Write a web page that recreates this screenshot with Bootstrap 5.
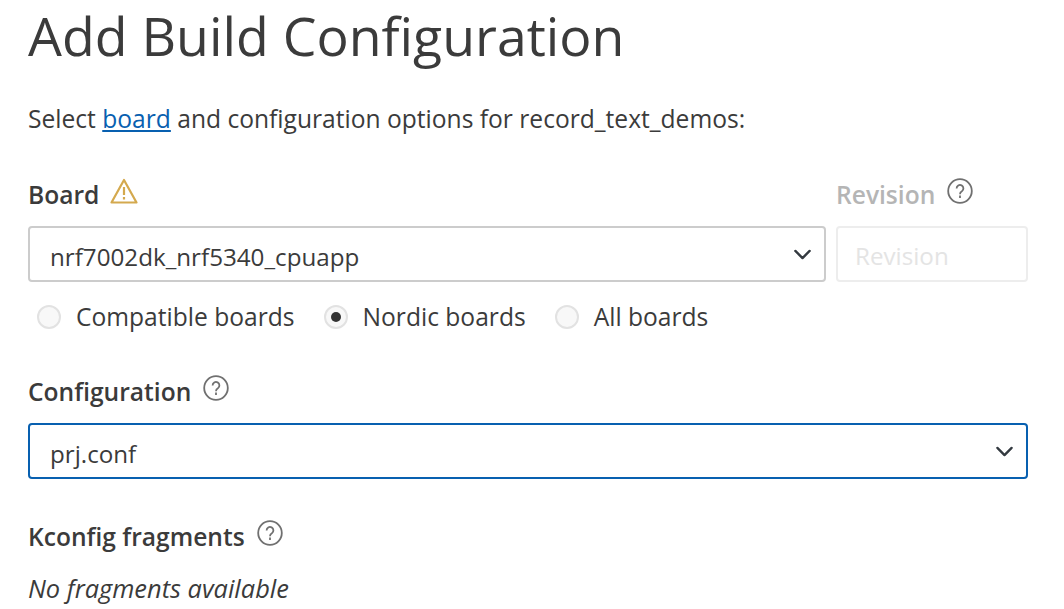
<!DOCTYPE html>
<html lang="en">
<head>
  <meta charset="UTF-8">
  <title>Add Build Configuration</title>
  <link href="https://cdn.jsdelivr.net/npm/bootstrap@5.3.3/dist/css/bootstrap.min.css" rel="stylesheet">
  <style>
    body { font-family: "Open Sans", "Noto Sans", sans-serif; color: #3b3b3b; font-size: 24.6px; overflow: hidden; }
    .page-wrap { padding: 0 36px 0 28px; }
    .page-title { font-size: 53.6px; font-weight: 400; line-height: 72px; margin: 0 0 30px; color: #3b3b3b; }
    .intro-line { line-height: 34px; margin: 0 0 42px; }
    .intro-line a { color: #0860b0; }
    .field-label { font-weight: 600; font-size: 24.6px; line-height: 34px; }
    .field-label.off { color: #b5b5b5; }
    .label-row { margin-bottom: 14px; }
    .board-grid { display: grid; grid-template-columns: 1fr 192px; column-gap: 10px; }
    .board-select, .conf-select, .rev-input {
      height: 56px; font-size: 24.2px; color: #3b3b3b; padding: 7px 50px 0 20px; border-radius: 4px;
      background-size: 19px 19px; background-position: right 12px center;
    }
    .board-select { border: 2px solid #cccccc; }
    .conf-select { border: 2px solid #0860b0; }
    .rev-input, .rev-input:disabled { border: 2px solid #ededed; background: #fff; padding: 3px 8px 0 17px; }
    .rev-input::placeholder { color: #e4e4e4; }
    .radio-row { gap: 29px; padding-left: 9px; height: 70px; margin-bottom: 23px; }
    .radio-dot { width: 24px; height: 24px; border-radius: 50%; border: 2px solid #e2e2e2; background: #f8f8f8; display: inline-flex; align-items: center; justify-content: center; margin-right: 15px; }
    .radio-dot.on::after { content: ""; width: 10px; height: 10px; border-radius: 50%; background: #333; }
    .help-icon { width: 26px; height: 26px; margin: 0 0 8px 12px; }
    .warn-icon { width: 28px; height: 26px; margin: 0 0 8px 11px; }
    .kconfig-row { margin: 41px 0 17px; }
    .no-frags { font-size: 25.4px; line-height: 34px; }
  </style>
</head>
<body class="bg-white">
  <div class="page-wrap">
    <h1 class="page-title">Add Build Configuration</h1>
    <p class="intro-line">Select <a href="#">board</a> and configuration options for record_text_demos:</p>

    <div class="board-grid">
      <div class="d-flex align-items-center label-row">
        <span class="field-label">Board</span>
        <svg class="warn-icon" viewBox="0 0 28 26" fill="none" stroke="#d4a94e" stroke-width="2.2"><path d="M14 2 L26.5 24.5 H1.5 Z" stroke-linejoin="round"/><path d="M14 9 V17 M14 19 V21.5"/></svg>
      </div>
      <div class="d-flex align-items-center label-row">
        <span class="field-label off">Revision</span>
        <svg class="help-icon" viewBox="0 0 26 26" fill="none" stroke="#707070" stroke-width="1.8"><circle cx="13" cy="13" r="11.8"/><path d="M9.6 10.4 a3.4 3.4 0 1 1 5.3 2.8 q-1.9 1 -1.9 3 M13 17.6 V20"/></svg>
      </div>
      <select class="form-select board-select"><option>nrf7002dk_nrf5340_cpuapp</option></select>
      <input class="form-control rev-input" placeholder="Revision" disabled>
    </div>
    <div class="d-flex align-items-center radio-row">
      <div class="d-flex align-items-center"><span class="radio-dot"></span>Compatible boards</div>
      <div class="d-flex align-items-center"><span class="radio-dot on"></span>Nordic boards</div>
      <div class="d-flex align-items-center"><span class="radio-dot"></span>All boards</div>
    </div>

    <div class="d-flex align-items-center label-row">
      <span class="field-label">Configuration</span>
      <svg class="help-icon" viewBox="0 0 26 26" fill="none" stroke="#707070" stroke-width="1.8"><circle cx="13" cy="13" r="11.8"/><path d="M9.6 10.4 a3.4 3.4 0 1 1 5.3 2.8 q-1.9 1 -1.9 3 M13 17.6 V20"/></svg>
    </div>
    <select class="form-select conf-select"><option>prj.conf</option></select>

    <div class="d-flex align-items-center kconfig-row">
      <span class="field-label">Kconfig fragments</span>
      <svg class="help-icon" viewBox="0 0 26 26" fill="none" stroke="#707070" stroke-width="1.8"><circle cx="13" cy="13" r="11.8"/><path d="M9.6 10.4 a3.4 3.4 0 1 1 5.3 2.8 q-1.9 1 -1.9 3 M13 17.6 V20"/></svg>
    </div>
    <div class="fst-italic no-frags">No fragments available</div>
  </div>
  <script src="https://cdn.jsdelivr.net/npm/bootstrap@5.3.3/dist/js/bootstrap.bundle.min.js"></script>
</body>
</html>
